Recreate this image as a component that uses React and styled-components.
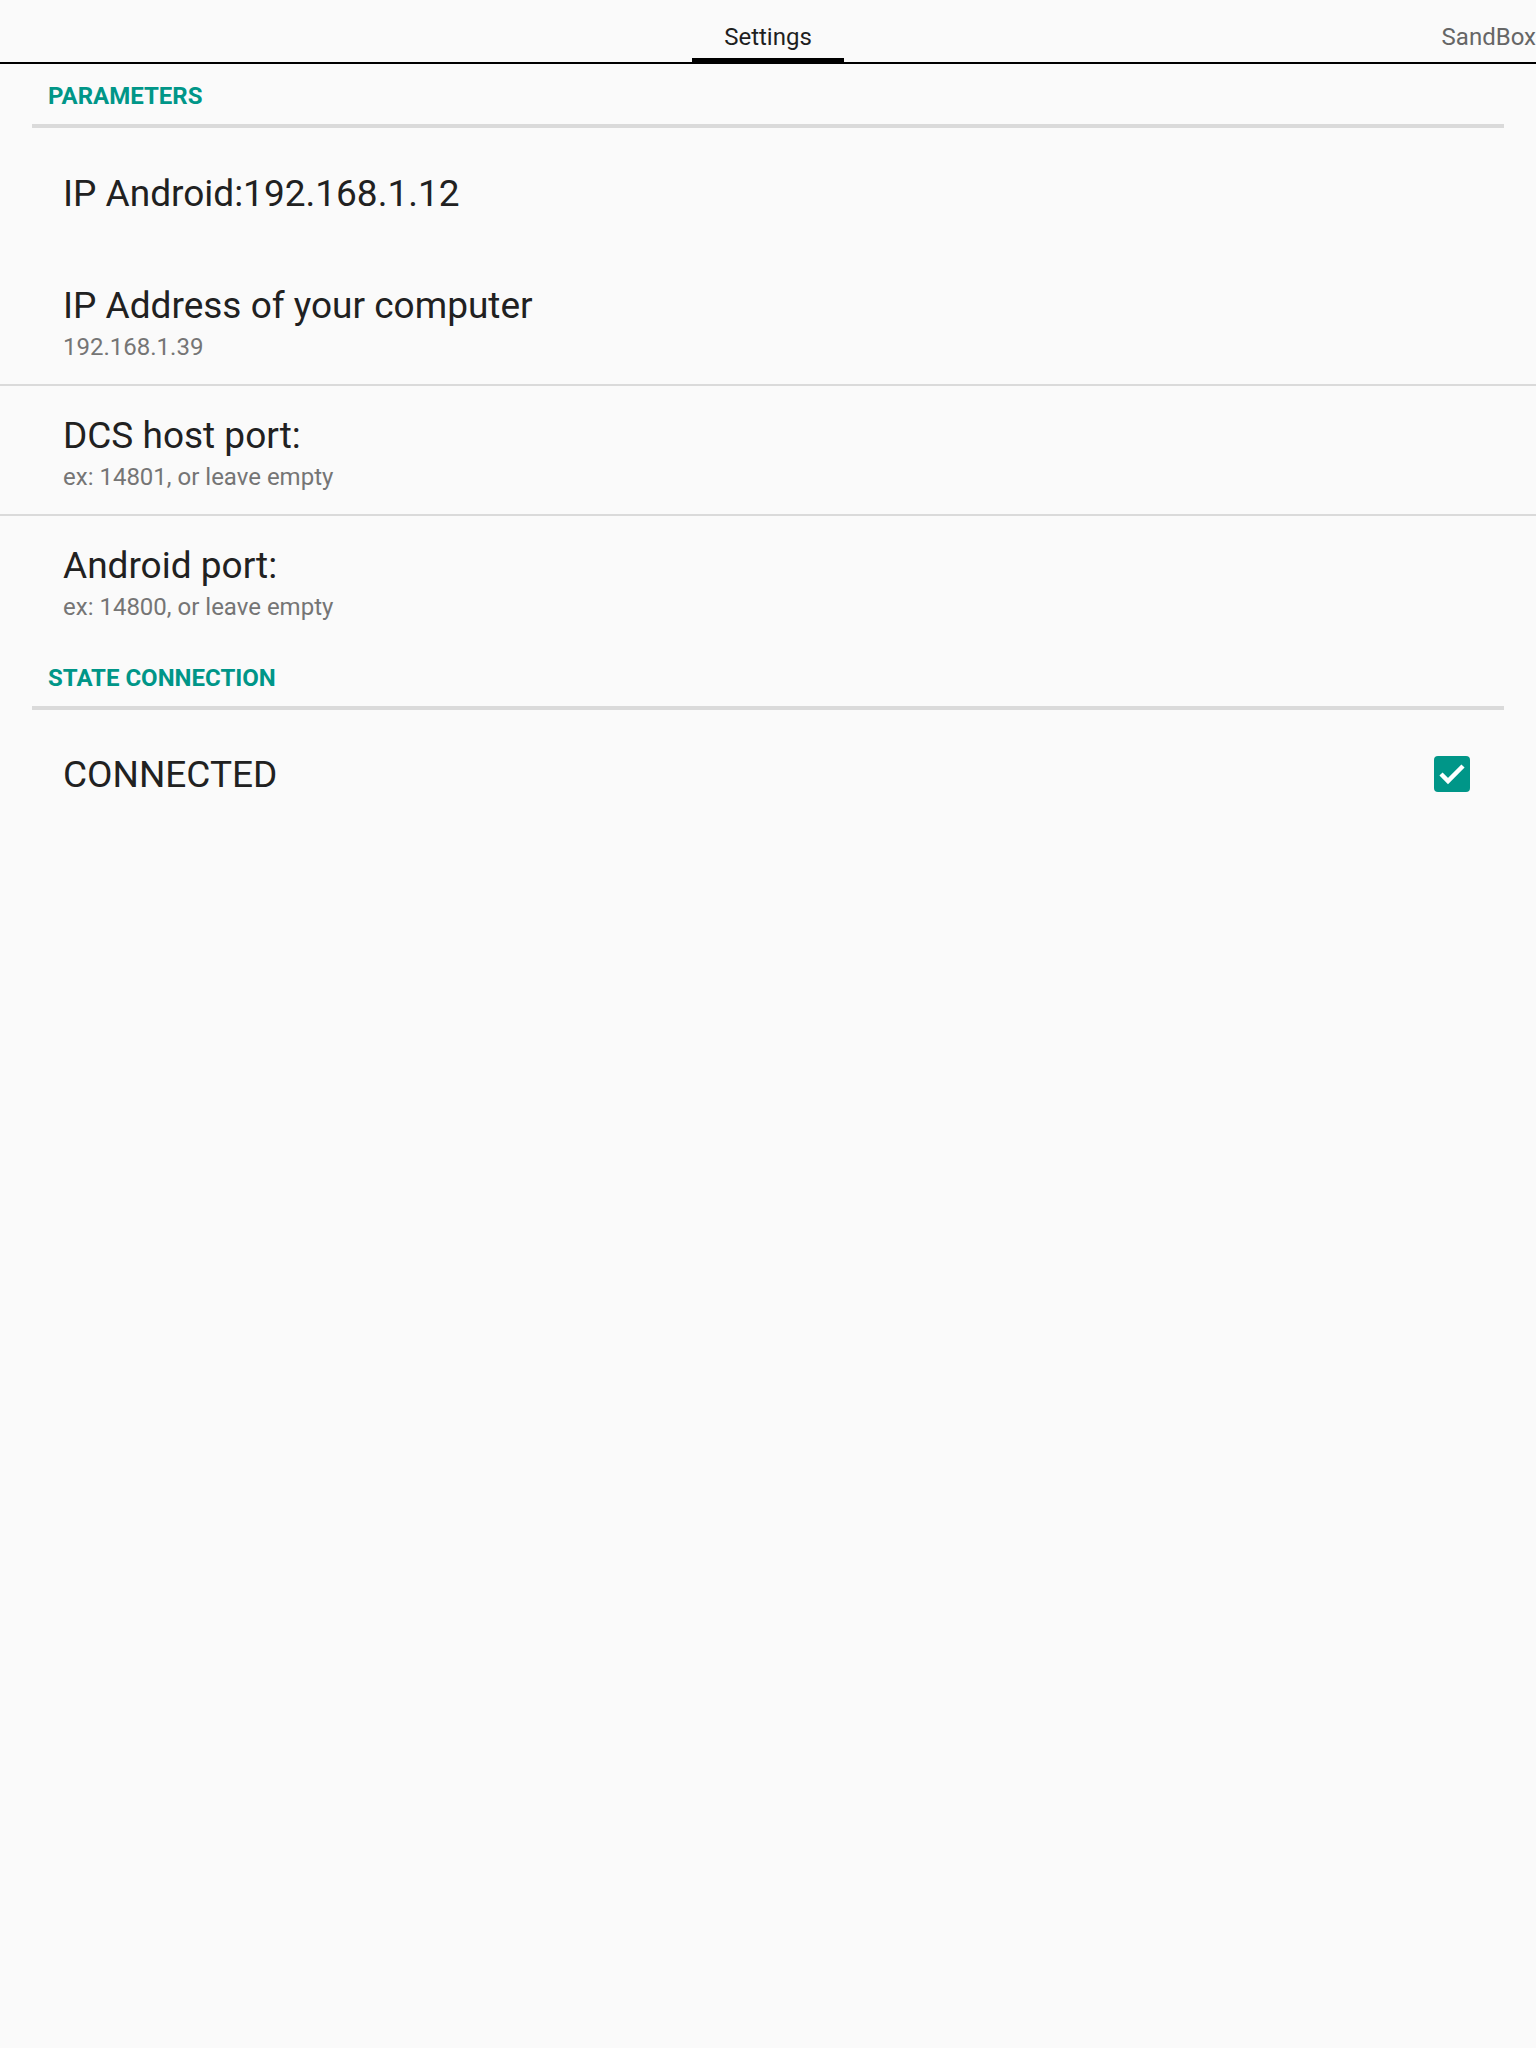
import React from 'react'
import styled, { createGlobalStyle } from 'styled-components'

const GlobalStyle = createGlobalStyle`
    html, body {
        margin: 0;
        padding: 0;
        background: #fafafa;
        font-family: Roboto, "Liberation Sans", sans-serif;
    }
`
const Page = styled.div`
    min-height: 2048px;
    background: #fafafa;
    overflow: hidden;
`
const TabBar = styled.div`
    display: grid;
    grid-template-columns: 1fr auto 1fr;
    height: 62px;
    border-bottom: 2px solid #000;
`
const Tab = styled.div`
    box-sizing: border-box;
    height: 62px;
    padding: 25px 32px 0;
    font-size: 24px;
    line-height: 24px;
    white-space: nowrap;
    color: ${props => props.$active ? '#1f1f1f' : '#666666'};
    border-bottom: ${props => props.$active ? '4px solid #000' : 'none'};
    justify-self: ${props => props.$end ? 'end' : 'auto'};
    padding-right: ${props => props.$end ? '0' : '32px'};
`
const CategoryHeader = styled.div`
    margin: 0 32px;
    padding: ${props => props.$top}px 16px 16px;
    border-bottom: 4px solid #dadada;
    font-size: 24px;
    line-height: 24px;
    font-weight: 700;
    color: #009688;
`
const PrefRow = styled.div`
    display: flex;
    flex-direction: column;
    padding: ${props => props.$pad};
    padding-left: 63px;
    border-bottom: ${props => props.$divider ? '2px solid #dadada' : 'none'};
`
const PrefTitle = styled.div`
    font-size: 37px;
    line-height: 36px;
    color: #212121;
`
const PrefSummary = styled.div`
    margin-top: 9px;
    font-size: 24px;
    line-height: 28px;
    color: #757575;
`
const CheckRow = styled.div`
    display: flex;
    align-items: center;
    justify-content: space-between;
    min-height: 128px;
    padding: 2px 66px 0 63px;
    box-sizing: border-box;
`
const CheckBox = styled.div`
    width: 36px;
    height: 36px;
    border-radius: 4px;
    background: #009688;
    display: flex;
    align-items: center;
    justify-content: center;
    margin-top: -2px;
`

const prefs = [
    { title: "IP Address of your computer", summary: "192.168.1.39", divider: true },
    { title: "DCS host port:", summary: "ex: 14801, or leave empty", divider: true },
    { title: "Android port:", summary: "ex: 14800, or leave empty", divider: false },
]

export default function App() {
    return (
        <Page>
            <GlobalStyle />
            <TabBar>
                <span></span>
                <Tab $active>Settings</Tab>
                <Tab $end>SandBox</Tab>
            </TabBar>

            <CategoryHeader $top={20}>PARAMETERS</CategoryHeader>
            <PrefRow $pad="48px 0 44px">
                <PrefTitle>IP Android:192.168.1.12</PrefTitle>
            </PrefRow>
            {prefs.map((pref, index) => {
                return (
                    <PrefRow key={index} $pad="32px 0 23px" $divider={pref.divider}>
                        <PrefTitle>{pref.title}</PrefTitle>
                        <PrefSummary>{pref.summary}</PrefSummary>
                    </PrefRow>
                )
            })}

            <CategoryHeader $top={22}>STATE CONNECTION</CategoryHeader>
            <CheckRow>
                <PrefTitle>CONNECTED</PrefTitle>
                <CheckBox>
                    <svg width="36" height="36" viewBox="0 0 36 36">
                        <polyline points="7,18 14,25 29,10" fill="none" stroke="#fff" strokeWidth="4.5" />
                    </svg>
                </CheckBox>
            </CheckRow>
        </Page>
    )
}
